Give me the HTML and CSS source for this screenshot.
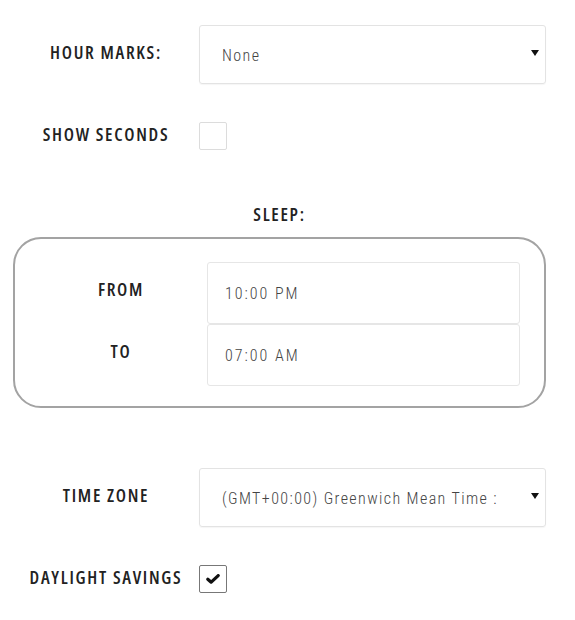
FILE: index.html
```html
<!DOCTYPE html>
<html>
<head>
<meta charset="utf-8">
<link rel="stylesheet" href="styles.css">
</head>
<body>
<div class="settings">
  <div class="row row-select">
    <div class="label">HOUR MARKS:</div>
    <div class="select">
      <span class="value">None</span>
      <svg class="arrow" width="8" height="6" viewBox="0 0 8 6"><path d="M0 0H8L4 6Z" fill="#111"/></svg>
    </div>
  </div>
  <div class="row row-check">
    <div class="label">SHOW SECONDS</div>
    <div class="checkbox"></div>
  </div>
  <div class="sleep-title">SLEEP:</div>
  <div class="sleep-box">
    <div class="sleep-row">
      <div class="label">FROM</div>
      <div class="input">10:00 PM</div>
    </div>
    <div class="sleep-row">
      <div class="label">TO</div>
      <div class="input input-last">07:00 AM</div>
    </div>
  </div>
  <div class="row row-select row-tz">
    <div class="label">TIME ZONE</div>
    <div class="select">
      <span class="value">(GMT+00:00) Greenwich Mean Time :</span>
      <svg class="arrow" width="8" height="6" viewBox="0 0 8 6"><path d="M0 0H8L4 6Z" fill="#111"/></svg>
    </div>
  </div>
  <div class="row row-check row-dst">
    <div class="label">DAYLIGHT SAVINGS</div>
    <div class="checkbox checked">
      <svg width="14" height="10" viewBox="0 0 14 10"><path d="M1.8 5.2L5.2 8.2L12.2 1.6" fill="none" stroke="#111" stroke-width="3.2" stroke-linecap="round" stroke-linejoin="round"/></svg>
    </div>
  </div>
</div>
</body>
</html>
```
FILE: styles.css
```css
html, body {
  margin: 0;
  padding: 0;
  background: #fff;
}
body {
  font-family: "Open Sans", sans-serif;
  color: #1f1f1f;
}
.settings {
  width: 533px;
  margin-left: 13px;
  padding-top: 25px;
}
.row {
  display: flex;
  align-items: center;
}
.label, .sleep-title {
  font-family: "Open Sans", sans-serif;
  font-stretch: 75%;
  font-size: 18px;
  font-weight: 600;
  letter-spacing: 1.7px;
  text-align: center;
  color: #222;
  white-space: nowrap;
}
.row .label {
  width: 186px;
  flex: none;
}
.row-select .label {
  margin-top: -6px;
}
.row-check .label {
  margin-top: -4px;
}
.select {
  flex: 1;
  height: 57px;
  border: 1px solid #e3e3e3;
  border-radius: 3px;
  box-shadow: 0 1px 1px rgba(0,0,0,0.04);
  display: flex;
  align-items: center;
  padding: 0 6px 0 22px;
  font-family: "Roboto", sans-serif;
  font-stretch: 75%;
  font-weight: 300;
  font-size: 16px;
  letter-spacing: 1.4px;
  color: #444;
}
.select .value {
  flex: 1;
  padding-top: 2px;
}
.select .arrow {
  flex: none;
  margin-top: -4px;
}
.row-check {
  margin-top: 38px;
}
.checkbox {
  width: 26px;
  height: 26px;
  border: 1px solid #dcdcdc;
  border-radius: 2px;
  display: flex;
  align-items: center;
  justify-content: center;
}
.checkbox.checked {
  border-color: #777;
}
.sleep-title {
  margin-top: 52px;
}
.sleep-box {
  margin-top: 11px;
  border: 2px solid #a3a3a3;
  border-radius: 28px;
  padding: 23px 24px 20px 20px;
}
.sleep-row {
  display: flex;
  align-items: center;
}
.sleep-row .label {
  width: 172px;
  flex: none;
  margin-top: -8px;
}
.input {
  flex: 1;
  height: 60px;
  border: 1px solid #e6e6e6;
  border-radius: 3px;
  display: flex;
  align-items: center;
  padding-left: 17px;
  font-family: "Roboto", sans-serif;
  font-stretch: 75%;
  font-weight: 300;
  font-size: 16px;
  letter-spacing: 2px;
  color: #444;
}
.row-tz {
  margin-top: 60px;
}
.row-dst {
  margin-top: 38px;
}
```
